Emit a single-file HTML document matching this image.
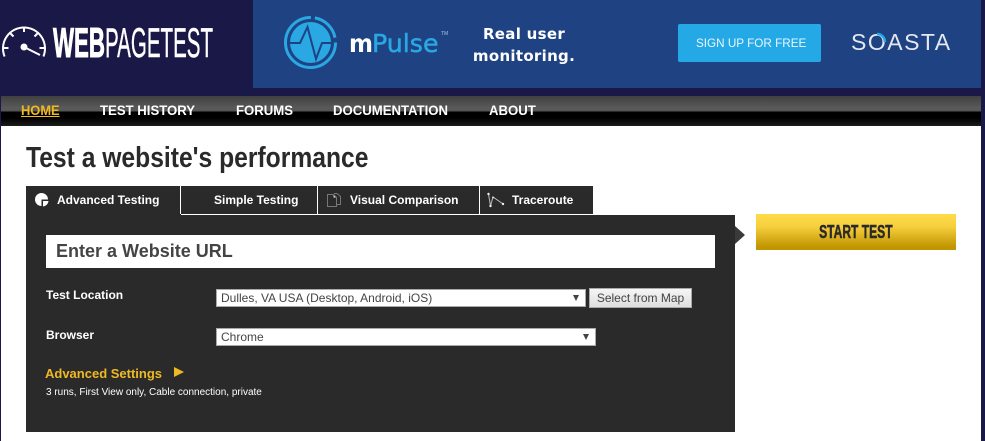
<!DOCTYPE html>
<html><head><meta charset="utf-8">
<style>
html,body{margin:0;padding:0;width:985px;height:441px;overflow:hidden;background:#1a1846;}
body{position:relative;font-family:"Liberation Sans",Arial,sans-serif;}
.a{position:absolute;white-space:nowrap;}
.nav{position:absolute;left:1px;top:96px;width:980px;height:30px;background:linear-gradient(#404040 0,#5a5a5a 12px,#555 15px,#000 16px,#000 22px,#1c1c1c 30px);}
.nav span{position:absolute;top:6px;font-size:14px;line-height:16px;font-weight:bold;color:#fff;white-space:nowrap;transform-origin:0 0;transform:scaleX(.94);}
.tab{position:absolute;top:186px;height:28px;background:#2a2a2a;color:#fff;font-size:12px;font-weight:bold;line-height:28px;white-space:nowrap;box-sizing:border-box;}
.sel{position:absolute;left:216px;height:18px;background:#fff;border:1px solid #a9a9a9;box-sizing:border-box;font-size:12px;line-height:16px;color:#444;padding-left:4px;}
.sel i{position:absolute;top:5px;width:0;height:0;border-left:3px solid transparent;border-right:3px solid transparent;border-top:6px solid #444;}
</style></head>
<body>
<div class="a" style="left:1px;top:126px;width:980px;height:315px;background:#fff"></div>
<div class="a" style="left:253px;top:0;width:728px;height:88px;background:#1f4283"></div>

<svg class="a" style="left:0;top:0" width="253" height="88" viewBox="0 0 253 88">
<g fill="none" stroke="#fff" stroke-width="2">
<path d="M4.600 56.500 A21 21 0 1 1 43.400 56.500"/>
<path d="M24 27v5M10 33l3.500 3.500M38 33l-3.500 3.500M3.500 48h5M44.500 48h-5"/>
<path d="M24 47l16 8"/>
</g>
<circle cx="24" cy="47" r="3.500" fill="#fff"/>
<text x="53" y="57" font-family="Liberation Sans" font-weight="bold" font-size="42" fill="#fff" stroke="#fff" stroke-width="1" textLength="52" lengthAdjust="spacingAndGlyphs">WEB</text>
<text x="105" y="57" font-family="Liberation Sans" font-size="42" fill="#fff" stroke="#fff" stroke-width=".4" textLength="108" lengthAdjust="spacingAndGlyphs">PAGETEST</text>
</svg>

<svg class="a" style="left:280px;top:12px" width="60" height="60" viewBox="0 0 60 60">
<circle cx="30.500" cy="30.500" r="25" fill="none" stroke="#29a8e3" stroke-width="3" stroke-dasharray="118 4 30 5"/>
<circle cx="30.500" cy="30.500" r="20.500" fill="#29a8e3"/>
<path d="M9 31H20L27.500 15 36 47 42 31H53" fill="none" stroke="#1f4283" stroke-width="2"/>
</svg>
<div class="a" style="left:349px;top:29px;font-family:'DejaVu Sans',sans-serif;font-size:25px;line-height:30px;font-weight:bold;color:#fff;transform-origin:0 0;transform:scaleX(.92)">m</div>
<div class="a" style="left:372px;top:29px;font-family:'DejaVu Sans',sans-serif;font-size:25px;line-height:30px;color:#29a8e3;-webkit-text-stroke:.5px #29a8e3;transform-origin:0 0;transform:scaleX(1.01)">Pulse</div>
<div class="a" style="left:441px;top:31px;font-size:5px;line-height:6px;color:#9fc4e4">TM</div>
<div class="a" style="left:456px;top:23px;width:136px;text-align:center;font-family:'DejaVu Sans',sans-serif;font-weight:bold;font-size:15px;line-height:22px;color:#fff;letter-spacing:.3px">Real user<br>monitoring.</div>
<div class="a" style="left:678px;top:24px;width:143px;height:38px;border-radius:2px;background:#25a9e6"></div>
<div class="a" style="left:696px;top:24px;color:#e9f6fd;font-size:12px;line-height:38px;transform-origin:0 0;transform:scaleX(.975)">SIGN UP FOR FREE</div>
<div class="a" style="left:851px;top:29px;font-size:23px;line-height:26px;color:#e4e8f0;letter-spacing:1.5px">SOASTA</div>
<svg class="a" style="left:866px;top:30px" width="26" height="26" viewBox="0 0 26 26">
<path d="M11 4A8 8 0 0 1 19 12" fill="none" stroke="#25a9e6" stroke-width="2.500"/>
</svg>

<div class="nav">
<span style="left:20px;color:#f0b920;text-decoration:underline;transform:scaleX(.92)">HOME</span>
<span style="left:99px">TEST HISTORY</span>
<span style="left:235px">FORUMS</span>
<span style="left:332px">DOCUMENTATION</span>
<span style="left:488px">ABOUT</span>
</div>

<div class="a" style="left:26px;top:141px;font-size:29px;line-height:34px;font-weight:bold;color:#2a2a2a;transform-origin:0 0;transform:scaleX(.85)">Test a website's performance</div>

<div class="tab" style="left:26px;width:154px;padding-left:31px">Advanced Testing</div>
<div class="a" style="left:180px;top:186px;width:1px;height:29px;background:#fff"></div>
<div class="a" style="left:26px;top:214px;width:155px;height:2px;background:#2a2a2a"></div>
<div class="tab" style="left:181px;width:136px;padding-left:33px;">Simple Testing</div>
<div class="tab" style="left:318px;width:161px;padding-left:32px">Visual Comparison</div>
<div class="tab" style="left:480px;width:113px;padding-left:32px">Traceroute</div>

<svg class="a" style="left:34px;top:192px" width="16" height="16" viewBox="0 0 16 16">
<circle cx="7.500" cy="7.500" r="6.500" fill="#fff"/>
<path d="M7.500 7.500H16V16H7.500Z" fill="#2a2a2a"/>
<path d="M9 9h5.500a6 6 0 0 1-5.500 5.500Z" fill="#fff"/>
</svg>
<svg class="a" style="left:326px;top:192px" width="16" height="16" viewBox="0 0 16 16">
<path d="M1.500 2.500H7.500L10.500 5.500V14.500H1.500Z" fill="none" stroke="#777" stroke-width="1"/>
<path d="M8 1.500H11L14.500 4.500V12.500H11" fill="none" stroke="#777" stroke-width="1"/>
<path d="M7.500 3L10 5.500H7.500Z" fill="#ddd"/>
</svg>
<svg class="a" style="left:487px;top:191px" width="18" height="18" viewBox="0 0 18 18">
<path d="M1.500 3L3.500 15 6 6 16 13" fill="none" stroke="#bbb" stroke-width="1"/>
<circle cx="1.500" cy="3" r="1.200" fill="#eee"/><circle cx="3.500" cy="15" r="1.200" fill="#eee"/><circle cx="6" cy="6.500" r="1" fill="#ddd"/><circle cx="16" cy="13" r="1.200" fill="#eee"/>
</svg>

<div class="a" style="left:26px;top:215px;width:709px;height:217px;background:#2a2a2a"></div>
<div class="a" style="left:735px;top:226px;width:0;height:0;border-top:9px solid transparent;border-bottom:9px solid transparent;border-left:10px solid #3a3a3a"></div>
<div class="a" style="left:46px;top:235px;width:669px;height:33px;background:#fff;color:#444;font-size:18px;font-weight:bold;line-height:33px;box-sizing:border-box;padding-left:10px">Enter a Website URL</div>

<div class="a" style="left:46px;top:288px;font-size:12px;line-height:15px;font-weight:bold;color:#fff">Test Location</div>
<div class="sel" style="top:289px;width:370px">Dulles, VA USA (Desktop, Android, iOS)<i style="left:356px"></i></div>
<div class="a" style="left:589px;top:288px;width:103px;height:20px;box-sizing:border-box;border:1px solid #aaa;background:linear-gradient(#f6f6f6,#dedede);color:#444;font-size:12px;line-height:18px;text-align:center">Select from Map</div>

<div class="a" style="left:46px;top:328px;font-size:12px;line-height:15px;font-weight:bold;color:#fff">Browser</div>
<div class="sel" style="top:328px;width:380px">Chrome<i style="left:366px"></i></div>

<div class="a" style="left:45px;top:366px;font-size:13px;line-height:16px;font-weight:bold;color:#efb924">Advanced Settings</div>
<div class="a" style="left:174px;top:367px;width:0;height:0;border-top:5.500px solid transparent;border-bottom:5.500px solid transparent;border-left:10px solid #efb924"></div>
<div class="a" style="left:46px;top:386px;font-size:10px;line-height:13px;color:#fff">3 runs, First View only, Cable connection, private</div>

<div class="a" style="left:756px;top:214px;width:200px;height:36px;background:linear-gradient(#ffdb4a 0,#f7cf3c 35%,#bf9500 92%,#bf9500 100%);color:#2a2a2a;font-size:18px;font-weight:bold;line-height:36px;text-align:center"><span style="display:inline-block;transform:scaleX(.67);-webkit-text-stroke:.5px #2a2a2a">START TEST</span></div>
</body></html>
